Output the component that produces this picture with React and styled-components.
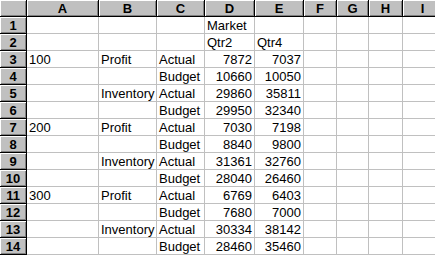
import styled, { createGlobalStyle } from "styled-components";

const GlobalStyle = createGlobalStyle`
	body {
		margin: 0;
		background: #ffffff;
		overflow: hidden;
	}
`;

const COLUMNS = [
	{ name: "A", width: 72 },
	{ name: "B", width: 58 },
	{ name: "C", width: 48 },
	{ name: "D", width: 50 },
	{ name: "E", width: 49 },
	{ name: "F", width: 33 },
	{ name: "G", width: 32 },
	{ name: "H", width: 34 },
	{ name: "I", width: 40 },
];

const ROWS = [
	["", "", "", "Market", ""],
	["", "", "", "Qtr2", "Qtr4"],
	["100", "Profit", "Actual", 7872, 7037],
	["", "", "Budget", 10660, 10050],
	["", "Inventory", "Actual", 29860, 35811],
	["", "", "Budget", 29950, 32340],
	["200", "Profit", "Actual", 7030, 7198],
	["", "", "Budget", 8840, 9800],
	["", "Inventory", "Actual", 31361, 32760],
	["", "", "Budget", 28040, 26460],
	["300", "Profit", "Actual", 6769, 6403],
	["", "", "Budget", 7680, 7000],
	["", "Inventory", "Actual", 30334, 38142],
	["", "", "Budget", 28460, 35460],
];

const Sheet = styled.div`
	display: grid;
	grid-template-columns: 27px ${COLUMNS.map((c) => `${c.width}px`).join(" ")};
	grid-auto-rows: 17px;
	width: 435px;
	height: 256px;
	overflow: hidden;
	font-family: "Liberation Sans", Arial, sans-serif;
	background: #ffffff;
`;

const Header = styled.div`
	box-sizing: border-box;
	background: #c0c0c0;
	border-right: 1px solid #000000;
	border-bottom: 1px solid #000000;
	box-shadow: inset 1px 1px 0 #ffffff, inset -1px -1px 0 #808080;
	display: flex;
	align-items: center;
	justify-content: center;
	font-size: 13px;
	font-weight: 700;
	color: #000000;
	line-height: 1;
`;

const Cell = styled.div`
	box-sizing: border-box;
	border-right: 1px solid #c0c0c0;
	border-bottom: 1px solid #c0c0c0;
	display: flex;
	align-items: center;
	justify-content: ${(p) => (p.$numeric ? "flex-end" : "flex-start")};
	padding: 0 2px;
	font-size: 13px;
	color: #000000;
	white-space: nowrap;
	overflow: ${(p) => (p.$overflow ? "visible" : "hidden")};
	line-height: 1;
`;

export default function App() {
	return (
		<>
			<GlobalStyle />
			<Sheet>
				<Header />
				{COLUMNS.map((c) => (
					<Header key={c.name}>{c.name}</Header>
				))}
				{ROWS.map((row, r) => (
					<Row key={r} index={r + 1} values={row} />
				))}
			</Sheet>
		</>
	);
}

function Row({ index, values }) {
	return (
		<>
			<Header>{index}</Header>
			{COLUMNS.map((c, i) => {
				const value = values[i] ?? "";
				return (
					<Cell key={c.name} $numeric={typeof value === "number"}>
						{value}
					</Cell>
				);
			})}
		</>
	);
}
